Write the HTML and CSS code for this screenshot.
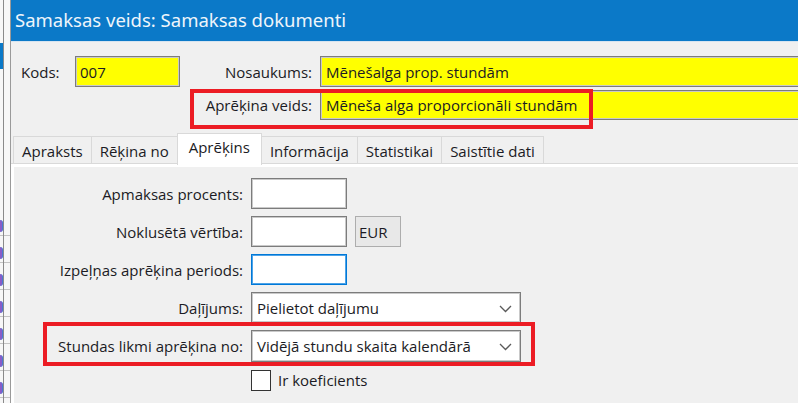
FILE: index.html
```html
<!DOCTYPE html>
<html lang="lv">
<head>
<meta charset="utf-8">
<title>Samaksas veids</title>
<link rel="stylesheet" href="styles.css">
</head>
<body>
<div class="screen">
  <div class="side-strip">
    <div class="strip-line"></div>
    <div class="strip-blue"></div>
    <div class="strip-items">
      <span class="dot"></span><span class="dot"></span><span class="dot"></span><span class="dot"></span><span class="dot"></span><span class="dot"></span><span class="dot"></span>
    </div>
  </div>
  <div class="window">
    <div class="titlebar">Samaksas veids: Samaksas dokumenti</div>
    <div class="body">
      <div class="header-grid">
        <label class="lbl lbl-kods">Kods:</label>
        <div class="field yellow kods">007</div>
        <label class="lbl lbl-right">Nosaukums:</label>
        <div class="field yellow wide">Mēnešalga prop. stundām</div>
        <label class="lbl lbl-right row2">Aprēķina veids:</label>
        <div class="field yellow wide">Mēneša alga proporcionāli stundām</div>
      </div>

      <div class="tabs">
        <div class="tab">Apraksts</div>
        <div class="tab">Rēķina no</div>
        <div class="tab active">Aprēķins</div>
        <div class="tab">Informācija</div>
        <div class="tab">Statistikai</div>
        <div class="tab">Saistītie dati</div>
      </div>
      <div class="tabpanel">
        <div class="panel-inner">
          <div class="form-grid">
            <label class="flbl">Apmaksas procents:</label>
            <div class="ctrl"><div class="field small"></div></div>

            <label class="flbl">Noklusētā vērtība:</label>
            <div class="ctrl"><div class="field small"></div><div class="currency">EUR</div></div>

            <label class="flbl">Izpeļņas aprēķina periods:</label>
            <div class="ctrl"><div class="field small focused"></div></div>

            <label class="flbl">Daļījums:</label>
            <div class="ctrl"><div class="field select">Pielietot daļījumu<svg class="chev" width="13" height="8" viewBox="0 0 13 8"><polyline points="1,1 6.5,6.5 12,1" fill="none" stroke="#5a5a5a" stroke-width="1.3"/></svg></div></div>

            <label class="flbl">Stundas likmi aprēķina no:</label>
            <div class="ctrl"><div class="field select tall">Vidējā stundu skaita kalendārā<svg class="chev" width="13" height="8" viewBox="0 0 13 8"><polyline points="1,1 6.5,6.5 12,1" fill="none" stroke="#5a5a5a" stroke-width="1.3"/></svg></div></div>

            <span></span>
            <div class="ctrl check-row"><span class="checkbox"></span><span class="check-label">Ir koeficients</span></div>
          </div>
        </div>
      </div>
    </div>
  </div>
  <div class="highlight hl-top"></div>
  <div class="highlight hl-bottom"></div>
</div>
</body>
</html>
```

FILE: styles.css
```css
* { box-sizing: border-box; }
html, body { margin: 0; padding: 0; }
body {
  width: 798px;
  height: 403px;
  overflow: hidden;
  background: #f0f0f0;
  font-family: "Open Sans", "Noto Sans", sans-serif;
  font-size: 15px;
  color: #1b1b24;
}
.screen {
  position: relative;
  display: flex;
  width: 798px;
  height: 403px;
  overflow: hidden;
}
.side-strip {
  position: relative;
  width: 10px;
  flex: none;
  background:
    repeating-linear-gradient(to bottom, transparent 0, transparent 26px, #c4c4c4 26px, #c4c4c4 27px) 0 209px / 10px 200px no-repeat,
    #f7f7f7;
}
.strip-line {
  position: absolute;
  left: 3px; top: 0; bottom: 0;
  width: 1px;
  background: #8a8a8a;
}
.strip-blue {
  position: absolute;
  left: 0; top: 43px;
  width: 3px; height: 26px;
  background: #0b79c8;
}
.strip-items {
  position: absolute;
  left: 0; top: 220px;
  display: flex;
  flex-direction: column;
  gap: 15px;
}
.dot {
  display: block;
  width: 3px; height: 12px;
  border-radius: 0 6px 6px 0;
  background: #8a5cc8;
  border-right: 1px solid #4a7ad0;
}
.window {
  flex: 1;
  min-width: 0;
  border-left: 1px solid #9a9a9a;
  display: flex;
  flex-direction: column;
}
.titlebar {
  height: 42px;
  flex: none;
  background: #0b79c8;
  color: #eef5fb;
  font-family: "Noto Sans", "Open Sans", sans-serif;
  font-size: 18.5px;
  line-height: 40px;
  padding-left: 4px;
  border-bottom: 1px solid #d6e4f0;
  white-space: nowrap;
}
.body {
  flex: 1;
  display: flex;
  flex-direction: column;
}
.header-grid {
  display: grid;
  grid-template-columns: 64px 105px 140px 1fr;
  grid-template-rows: 31px 30px;
  row-gap: 3px;
  margin-top: 14px;
  margin-right: -12px;
  align-items: center;
}
.lbl { white-space: nowrap; }
.lbl-kods { padding-left: 10px; }
.lbl-right { text-align: right; padding-right: 8px; grid-column: 3; }
.field {
  height: 100%;
  background: #fff;
  border: 1px solid #7c7c7c;
  box-shadow: inset 0 0 0 1px #c9c9c9;
  padding-left: 5px;
  display: flex;
  align-items: center;
  white-space: nowrap;
}
.yellow { background: #ffff00; }
.kods { padding-left: 4px; }
.tabs {
  display: flex;
  align-items: flex-end;
  height: 33px;
  margin-top: 10px;
  padding-left: 2px;
}
.tab {
  height: 27px;
  padding: 1px 8px 0 8px;
  border: 1px solid #d9d9d9;
  border-bottom: none;
  margin-right: -1px;
  background: #f0f0f0;
  display: flex;
  align-items: center;
  white-space: nowrap;
}
.tab.active {
  height: 32px;
  background: #fff;
  position: relative;
  z-index: 1;
  margin-bottom: -2px;
  padding-bottom: 6px;
  padding-left: 11px;
  padding-right: 11px;
}
.tabpanel {
  flex: 1;
  border-top: 1px solid #d9d9d9;
  background: #fff;
  padding: 3px 0 0 3px;
  display: flex;
}
.panel-inner {
  flex: 1;
  background: #f0f0f0;
  padding-top: 11px;
}
.form-grid {
  display: grid;
  grid-template-columns: 229px 1fr;
  grid-template-rows: 31px 31px 31px 31px 32px 22px;
  column-gap: 8px;
  row-gap: 7px;
}
.flbl {
  text-align: right;
  align-self: center;
  white-space: nowrap;
}
.ctrl {
  display: flex;
  gap: 8px;
  align-items: stretch;
}
.small { width: 96px; }
.focused {
  border: 1px solid #0078d7;
  box-shadow: inset 0 0 0 1px #4da3e8;
}
.currency {
  width: 46px;
  border: 1px solid #adadad;
  background: #e8e8e8;
  display: flex;
  align-items: center;
  padding-left: 3px;
}
.select {
  width: 270px;
  position: relative;
  padding-left: 5px;
}
.chev {
  position: absolute;
  right: 8px;
  top: 50%;
  margin-top: -3px;
}
.check-row {
  align-items: center;
  gap: 7px;
}
.checkbox {
  width: 20px;
  height: 21px;
  background: #fff;
  border: 1px solid #333;
}
.highlight {
  position: absolute;
  border: 4px solid #ec1c24;
  pointer-events: none;
}
.hl-top { left: 190px; top: 89px; width: 403px; height: 40px; }
.hl-bottom { left: 43px; top: 322px; width: 492px; height: 44px; }
```
